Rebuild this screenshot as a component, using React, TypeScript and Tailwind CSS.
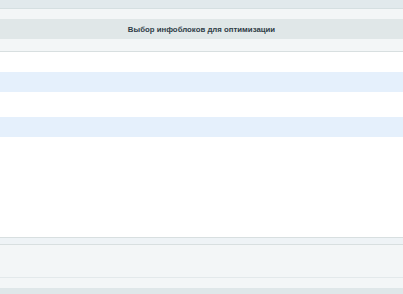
export default function App() {
  return (
    <div className="flex h-[294px] w-full flex-col bg-white font-['Liberation_Sans',Arial,sans-serif]">
      {/* top toolbar strip */}
      <div className="h-[9px] border-b border-[#d5dfe1] bg-[#e1e9ec]" />
      <div className="h-[10px] bg-[#f3f6f7]" />
      <div className="flex h-[20px] items-center justify-center bg-[#e0e7e8] pt-px text-[7.8px] font-bold text-[#2f3d47]">
        Выбор инфоблоков для оптимизации
      </div>
      <div className="h-[13px] border-b border-[#d8dfe0] bg-[#f3f6f7]" />

      {/* rows */}
      <div className="h-[20px] bg-white" />
      <div className="h-[20px] bg-[#e5f0fc]" />
      <div className="h-[25px] bg-white" />
      <div className="h-[20px] bg-[#e5f0fc]" />
      <div className="h-[100px] bg-white" />

      {/* footer */}
      <div className="h-[8px] border-t border-b border-[#d8dfe0] bg-[#eef3f6]" />
      <div className="h-[33px] border-b border-[#e3e9eb] bg-[#f3f6f7]" />
      <div className="h-[10px] bg-[#f3f6f7]" />
      <div className="flex-1 bg-[#dfe7e9]" />
    </div>
  )
}
